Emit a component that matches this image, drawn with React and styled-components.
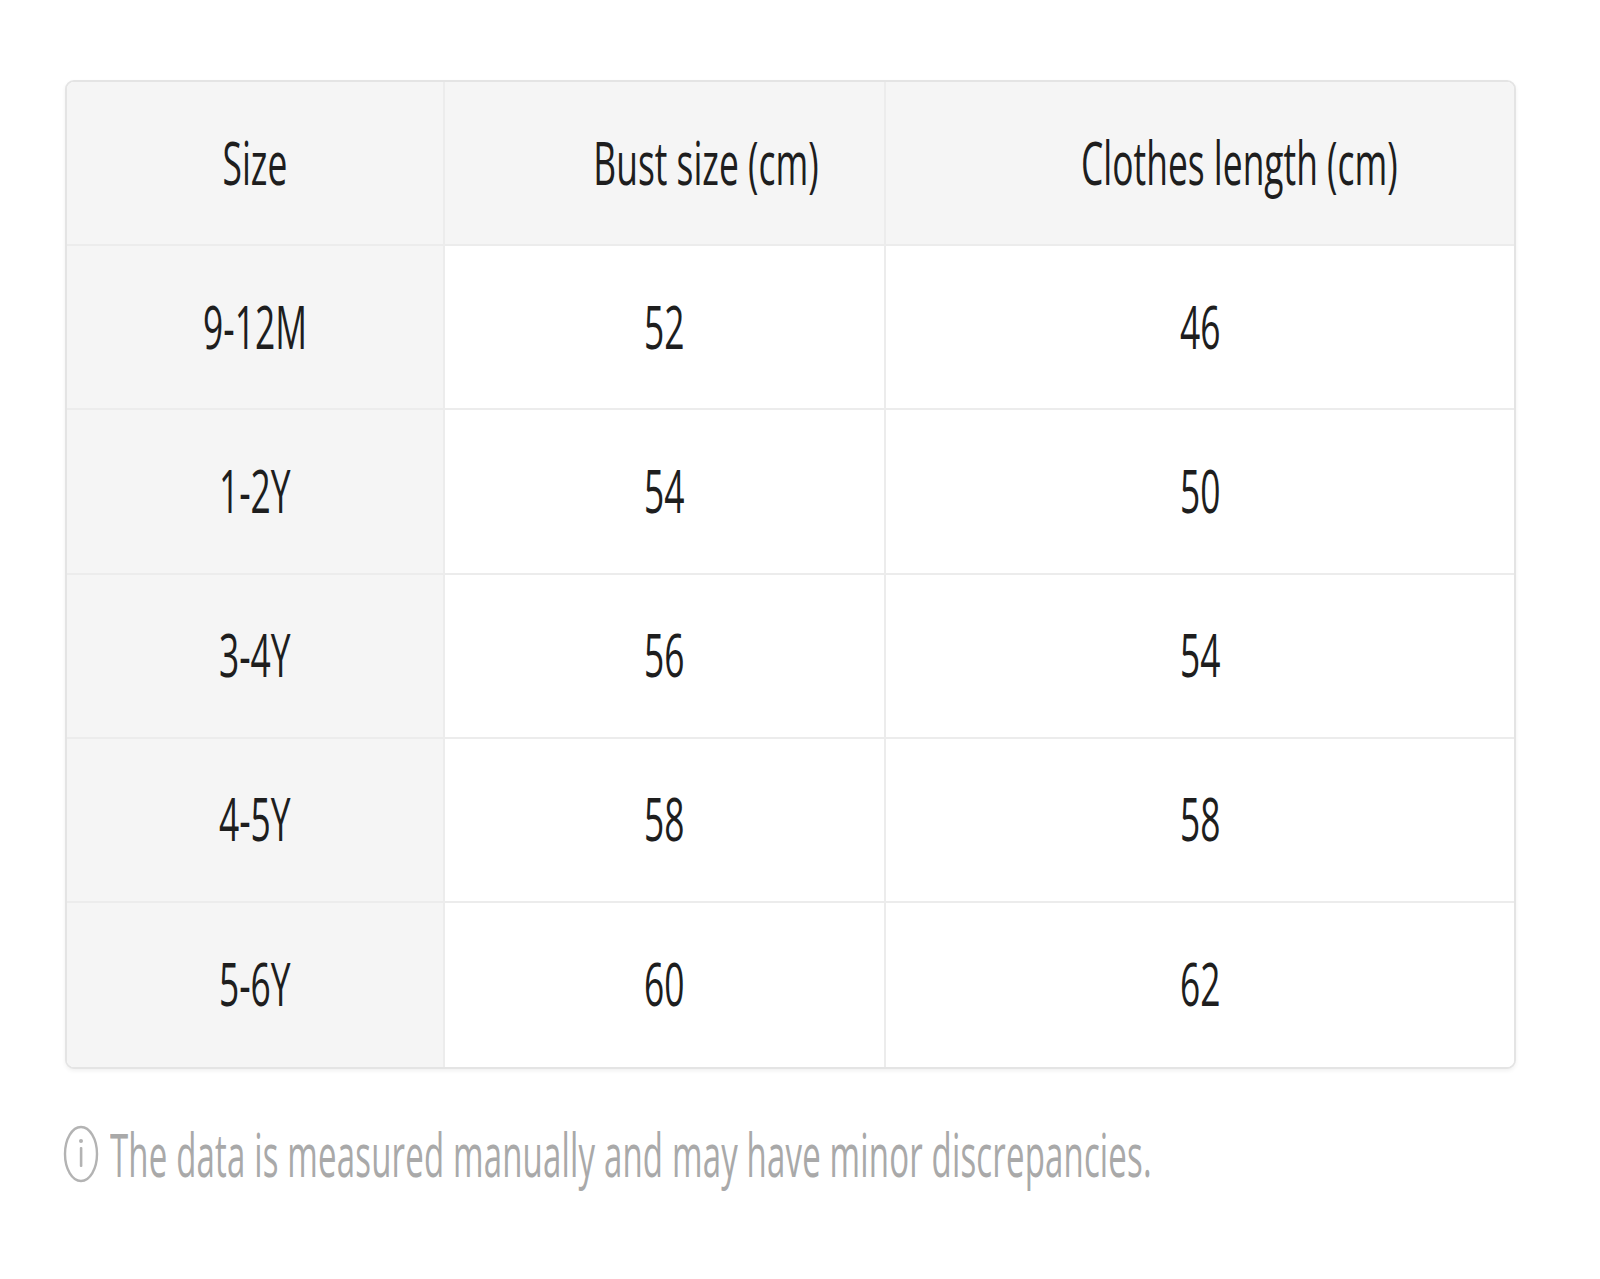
import React from "react";
import styled, { createGlobalStyle } from "styled-components";

const Global = createGlobalStyle`
  html, body { margin: 0; padding: 0; background: #ffffff; }
  body { font-family: "Open Sans", "Noto Sans", sans-serif; }
`;

const Page = styled.div`
  padding: 80px 0 0 0;
  width: 1600px;
  height: 1279px;
  box-sizing: border-box;
  overflow: hidden;
`;

const Table = styled.div`
  margin-left: 65px;
  width: 1451px;
  height: 989px;
  box-sizing: border-box;
  display: grid;
  grid-template-columns: 378px 441px 1fr;
  grid-template-rows: repeat(6, 1fr);
  border: 2px solid #e4e4e4;
  border-radius: 9px;
  overflow: hidden;
  box-shadow: 0 2px 4px rgba(0, 0, 0, 0.06);
  background: #ffffff;
`;

const Cell = styled.div`
  display: flex;
  align-items: center;
  justify-content: center;
  box-sizing: border-box;
  padding-left: ${(p) => p.$shift || 0}px;
  padding-bottom: 3px;
  background: ${(p) => (p.$shade ? "#f5f5f5" : "#ffffff")};
  border-right: ${(p) => (p.$lastCol ? "none" : "2px solid #ececec")};
  border-bottom: ${(p) => (p.$lastRow ? "none" : "2px solid #ececec")};
`;

const Label = styled.span`
  display: inline-block;
  font-family: "Open Sans", "Noto Sans", sans-serif;
  font-size: 60px;
  line-height: 1;
  color: #1e1e1e;
  white-space: nowrap;
  transform: scaleX(0.59);
  transform-origin: center;
`;

const Note = styled.div`
  display: flex;
  align-items: center;
  margin-top: 55px;
  padding-left: 63px;
  gap: 11px;
  color: #a9a9a9;
`;

const IconBox = styled.span`
  display: inline-flex;
  flex-shrink: 0;
  width: 36px;
  height: 58px;
`;

const NoteText = styled.span`
  display: inline-block;
  flex-shrink: 0;
  font-family: "Open Sans", "Noto Sans", sans-serif;
  font-size: 60px;
  line-height: 1;
  letter-spacing: 0.3px;
  white-space: nowrap;
  transform: scaleX(0.55);
  transform-origin: left center;
`;

const InfoIcon = () => (
  <IconBox>
    <svg width="36" height="58" viewBox="0 0 36 58" fill="none">
      <ellipse cx="18" cy="29" rx="16" ry="27" stroke="#b3b3b3" strokeWidth="2.4" />
      <circle cx="18" cy="16" r="2" fill="#b3b3b3" />
      <rect x="16.8" y="22" width="2.6" height="20" rx="1" fill="#b3b3b3" />
    </svg>
  </IconBox>
);

const headers = [
  { text: "Size", shift: -10 },
  { text: "Bust size (cm)", shift: 83 },
  { text: "Clothes length (cm)", shift: 79 },
];

const rows = [
  ["9-12M", "52", "46"],
  ["1-2Y", "54", "50"],
  ["3-4Y", "56", "54"],
  ["4-5Y", "58", "58"],
  ["5-6Y", "60", "62"],
];

export default function App() {
  return (
    <Page>
      <Global />
      <Table>
        {headers.map((h, i) => (
          <Cell key={h.text} $shade $shift={h.shift} $lastCol={i === 2}>
            <Label>{h.text}</Label>
          </Cell>
        ))}
        {rows.map((r, ri) =>
          r.map((v, ci) => (
            <Cell
              key={`${ri}-${ci}`}
              $shade={ci === 0}
              $lastCol={ci === 2}
              $lastRow={ri === rows.length - 1}
            >
              <Label>{v}</Label>
            </Cell>
          ))
        )}
      </Table>
      <Note>
        <InfoIcon />
        <NoteText>The data is measured manually and may have minor discrepancies.</NoteText>
      </Note>
    </Page>
  );
}
